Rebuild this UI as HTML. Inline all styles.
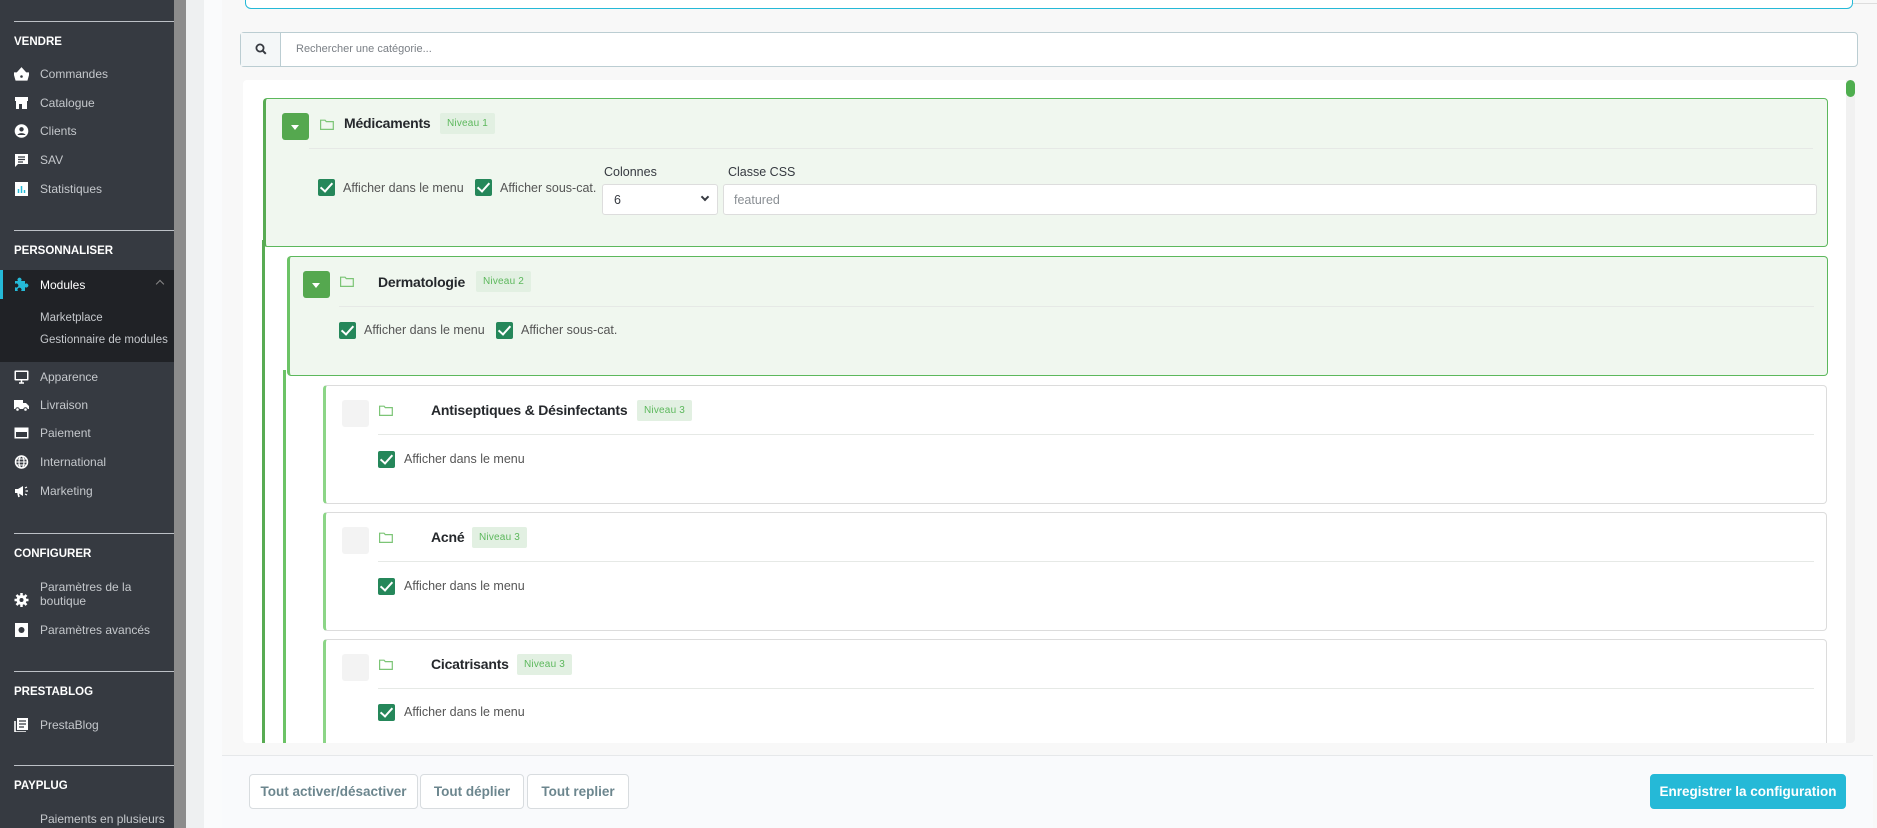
<!DOCTYPE html>
<html><head><meta charset="utf-8">
<style>
*{box-sizing:border-box;margin:0;padding:0}
body{width:1877px;height:828px;overflow:hidden;position:relative;background:#f8f8f8;font-family:"Liberation Sans",sans-serif;color:#363a41}
.a{position:absolute}
#sb{left:0;top:0;width:174px;height:828px;background:#363a41}
.hd{position:absolute;left:14px;font-size:11.5px;font-weight:bold;color:#fff}
.dv{position:absolute;left:14px;width:160px;height:1px;background:#bcc0c6}
.it{position:absolute;left:40px;font-size:12px;color:#c5c8cc;line-height:14px}
.ic{position:absolute;left:14px;width:15px;height:14px}
.cb{position:absolute;width:17px;height:17px;background:#25875a;border-radius:2px}
.cb:after{content:"";position:absolute;left:5px;top:1px;width:5px;height:10px;border:solid #fff;border-width:0 2.5px 2.5px 0;transform:rotate(42deg)}
.lb{position:absolute;font-size:12.5px;color:#555}
.badge{position:absolute;height:21px;background:#e2f0e2;color:#5cb85c;font-size:10px;line-height:21px;padding:0 7px;border-radius:2px;letter-spacing:0.2px}
.tg{position:absolute;width:27px;height:27px;background:#55a84f;border-radius:3px}
.tg:after{content:"";position:absolute;left:9px;top:12px;border-left:4.5px solid transparent;border-right:4.5px solid transparent;border-top:5px solid #fff}
.fd{position:absolute;width:14px;height:11px}
.tt{position:absolute;font-size:14px;font-weight:bold;color:#25282c;letter-spacing:-0.2px}
.hr{position:absolute;height:1px;background:#e6e9e6}
.c3{position:absolute;left:323px;width:1504px;height:119px;background:#fff;border:1px solid #dcdcdc;border-left:3px solid #8cd587;border-radius:4px}
.ph{position:absolute;width:27px;height:27px;background:#f3f3f3;border-radius:3px}
.btn{position:absolute;top:774px;height:35px;border:1px solid #d8dcdf;border-radius:4px;background:#fff;color:#6c868e;font-size:13.5px;font-weight:bold;text-align:center;line-height:33px}
</style></head><body>
<div id="sb" class="a">
<div class="dv" style="top:21px"></div>
<div class="hd" style="top:36px">VENDRE</div>
<svg class="ic" style="top:67px" viewBox="0 0 15 14"><path d="M0 6h15l-2 7H2z M3 6l4.5-5L12 6" fill="#fff" stroke="#fff" stroke-width="1.2"/><circle cx="7.5" cy="9.5" r="1.3" fill="#363a41"/></svg>
<div class="it" style="top:67px">Commandes</div>
<svg class="ic" style="top:96px" viewBox="0 0 15 14"><path d="M1 1h13v4H1z M2 5h11v8H2z" fill="#fff"/><rect x="5" y="8" width="3" height="5" fill="#363a41"/></svg>
<div class="it" style="top:96px">Catalogue</div>
<svg class="ic" style="top:124px" viewBox="0 0 15 14"><circle cx="7.5" cy="7" r="6.8" fill="#fff"/><circle cx="7.5" cy="5.3" r="2.2" fill="#363a41"/><path d="M3.5 11c1-2.5 7-2.5 8 0" fill="#363a41"/></svg>
<div class="it" style="top:124px">Clients</div>
<svg class="ic" style="top:153px" viewBox="0 0 15 14"><path d="M1 1h13v10H4l-3 3z" fill="#fff"/><path d="M4 4h7M4 6.5h7M4 9h5" stroke="#363a41" stroke-width="1.2"/></svg>
<div class="it" style="top:153px">SAV</div>
<svg class="ic" style="top:182px" viewBox="0 0 15 14"><rect x="1" y="0" width="13" height="14" fill="#fff"/><path d="M4.5 11V7M7.5 11V4M10.5 11V8" stroke="#25b9d7" stroke-width="1.5"/></svg>
<div class="it" style="top:182px">Statistiques</div>
<div class="dv" style="top:230px"></div>
<div class="hd" style="top:245px">PERSONNALISER</div>
<div class="a" style="left:0;top:270px;width:174px;height:92px;background:#202226"></div>
<div class="a" style="left:0;top:270px;width:3px;height:29px;background:#25b9d7"></div>
<svg class="ic" style="top:277px" viewBox="0 0 15 14"><path d="M1 4h3a2 2 0 1 1 3 0h4v3a2 2 0 1 1 0 3v4H7a2 2 0 1 0-3 0H1v-4a2 2 0 1 0 0-3z" fill="#25b9d7"/></svg>
<div class="it" style="top:278px;color:#fff">Modules</div>
<div class="a" style="left:157px;top:281px;width:6px;height:6px;border-left:1.3px solid #888;border-top:1.3px solid #888;transform:rotate(45deg)"></div>
<div class="it" style="top:311px;font-size:11.5px">Marketplace</div>
<div class="it" style="top:333px;font-size:11.5px">Gestionnaire de modules</div>
<svg class="ic" style="top:370px" viewBox="0 0 15 14"><rect x="0.5" y="0.5" width="14" height="10" rx="1" fill="#fff"/><rect x="2" y="2" width="11" height="7" fill="#363a41"/><path d="M5 13h5M7.5 10v3" stroke="#fff" stroke-width="1.5"/></svg>
<div class="it" style="top:370px">Apparence</div>
<svg class="ic" style="top:398px" viewBox="0 0 15 14"><path d="M0 2h9v9H0z M9 5h3l3 3v3H9z" fill="#fff"/><circle cx="3.5" cy="11.5" r="1.8" fill="#fff" stroke="#363a41"/><circle cx="11.5" cy="11.5" r="1.8" fill="#fff" stroke="#363a41"/></svg>
<div class="it" style="top:398px">Livraison</div>
<svg class="ic" style="top:426px" viewBox="0 0 15 14"><rect x="0.5" y="1.5" width="14" height="11" fill="#fff"/><rect x="2" y="6" width="11" height="5" fill="#363a41"/></svg>
<div class="it" style="top:426px">Paiement</div>
<svg class="ic" style="top:455px" viewBox="0 0 15 14"><circle cx="7.5" cy="7" r="6" fill="none" stroke="#fff" stroke-width="1.5"/><ellipse cx="7.5" cy="7" rx="2.5" ry="6" fill="none" stroke="#fff" stroke-width="1.2"/><path d="M1.5 7h12M2.5 4h10M2.5 10h10" stroke="#fff" stroke-width="1"/></svg>
<div class="it" style="top:455px">International</div>
<svg class="ic" style="top:484px" viewBox="0 0 15 14"><path d="M1 5h3l5-3v10L4 9H1z" fill="#fff"/><path d="M4 9l1 4" stroke="#fff" stroke-width="1.6"/><path d="M11 4l2-1M11.5 7h2.5M11 10l2 1" stroke="#fff" stroke-width="1.2"/></svg>
<div class="it" style="top:484px">Marketing</div>
<div class="dv" style="top:533px"></div>
<div class="hd" style="top:548px">CONFIGURER</div>
<svg class="ic" style="top:593px" viewBox="0 0 15 14"><circle cx="7.5" cy="7" r="5" fill="#fff"/><path d="M7.5 0v14M0.5 7h14M2.5 2l10 10M12.5 2l-10 10" stroke="#fff" stroke-width="2.5"/><circle cx="7.5" cy="7" r="2" fill="#363a41"/></svg>
<div class="it" style="top:580px">Paramètres de la<br>boutique</div>
<svg class="ic" style="top:623px" viewBox="0 0 15 14"><rect x="1" y="0" width="13" height="14" fill="#fff"/><circle cx="7.5" cy="7" r="3" fill="#363a41"/></svg>
<div class="it" style="top:623px">Paramètres avancés</div>
<div class="dv" style="top:671px"></div>
<div class="hd" style="top:686px">PRESTABLOG</div>
<svg class="ic" style="top:718px" viewBox="0 0 15 14"><rect x="3" y="0" width="11" height="12" fill="#fff"/><path d="M1 3v11h11" fill="none" stroke="#fff" stroke-width="1.6"/><path d="M5 3h7M5 6h7M5 9h5" stroke="#363a41" stroke-width="1.2"/></svg>
<div class="it" style="top:718px">PrestaBlog</div>
<div class="dv" style="top:765px"></div>
<div class="hd" style="top:780px">PAYPLUG</div>
<div class="it" style="top:812px">Paiements en plusieurs</div>
</div>
<div class="a" style="left:174px;top:0;width:12px;height:828px;background:#8c8c8c"></div>
<div class="a" style="left:186px;top:0;width:18px;height:828px;background:#eef0f1"></div>
<div class="a" style="left:204px;top:0;width:18px;height:828px;background:#fafbfc"></div>
<div class="a" style="left:222px;top:0;width:1655px;height:828px;background:#f8f8f8"></div>
<div class="a" style="left:245px;top:-10px;width:1608px;height:19px;border:1px solid #25b9d7;border-radius:0 0 6px 6px;background:#fff"></div>
<div class="a" style="left:1853px;top:3px;width:24px;height:1px;background:#ddd"></div>
<!-- search -->
<div class="a" style="left:240px;top:32px;width:1618px;height:35px;border:1px solid #bbcdd2;border-radius:4px;background:#fff"></div>
<div class="a" style="left:241px;top:33px;width:40px;height:33px;background:#f4f7f8;border-right:1px solid #bbcdd2"></div>
<svg class="a" style="left:255px;top:43px" width="12" height="12" viewBox="0 0 12 12"><circle cx="5" cy="5" r="3.6" fill="none" stroke="#363a41" stroke-width="1.8"/><path d="M7.6 7.6l3.2 3.2" stroke="#363a41" stroke-width="2"/></svg>
<div class="a" style="left:296px;top:43px;font-size:11px;color:#7a7f85">Rechercher une catégorie...</div>
<!-- tree -->
<div class="a" style="left:243px;top:80px;width:1612px;height:663px;background:#fff;border-radius:4px;overflow:hidden">
<div class="a" style="left:1603px;top:0;width:9px;height:663px;background:#f1f1f1"></div>
<div class="a" style="left:1603px;top:0;width:9px;height:17px;background:#4fae4f;border-radius:5px"></div>
</div>
<div class="a" style="left:262px;top:240px;width:3px;height:503px;background:#58ab53"></div>
<div class="a" style="left:283px;top:370px;width:3px;height:373px;background:#6cc366"></div>
<!-- level1 -->
<div class="a" style="left:263px;top:98px;width:1565px;height:149px;background:#f0f7ef;border:1px solid #5cb85c;border-left:3px solid #58ab53;border-radius:4px"></div>
<div class="tg" style="left:282px;top:113px"></div>
<svg class="fd" style="left:320px;top:119px" viewBox="0 0 14 11"><path d="M0.6 1.2h4.5l1.2 1.4h7v7.8H0.6z" fill="none" stroke="#7cc576" stroke-width="1.2"/></svg>
<div class="tt" style="left:344px;top:115px">Médicaments</div>
<div class="badge" style="left:440px;top:113px">Niveau 1</div>
<div class="hr" style="left:309px;top:148px;width:1504px"></div>
<div class="cb" style="left:318px;top:179px"></div><div class="lb" style="left:343px;top:181px">Afficher dans le menu</div>
<div class="cb" style="left:475px;top:179px"></div><div class="lb" style="left:500px;top:181px">Afficher sous-cat.</div>
<div class="lb" style="left:604px;top:165px;color:#363a41">Colonnes</div>
<div class="a" style="left:602px;top:184px;width:116px;height:31px;background:#fff;border:1px solid #ddd;border-radius:3px"></div>
<div class="lb" style="left:614px;top:193px;color:#363a41">6</div>
<div class="a" style="left:702px;top:194px;width:6px;height:6px;border-right:2px solid #363a41;border-bottom:2px solid #363a41;transform:rotate(45deg)"></div>
<div class="lb" style="left:728px;top:165px;color:#363a41">Classe CSS</div>
<div class="a" style="left:723px;top:184px;width:1094px;height:31px;background:#fff;border:1px solid #ddd;border-radius:3px"></div>
<div class="lb" style="left:734px;top:193px;color:#8a8f94">featured</div>
<!-- level2 -->
<div class="a" style="left:287px;top:256px;width:1541px;height:120px;background:#f0f7ef;border:1px solid #5cb85c;border-left:3px solid #6cc366;border-radius:4px"></div>
<div class="tg" style="left:303px;top:271px"></div>
<svg class="fd" style="left:340px;top:276px" viewBox="0 0 14 11"><path d="M0.6 1.2h4.5l1.2 1.4h7v7.8H0.6z" fill="none" stroke="#7cc576" stroke-width="1.2"/></svg>
<div class="tt" style="left:378px;top:274px">Dermatologie</div>
<div class="badge" style="left:476px;top:271px">Niveau 2</div>
<div class="hr" style="left:339px;top:306px;width:1475px"></div>
<div class="cb" style="left:339px;top:322px"></div><div class="lb" style="left:364px;top:323px">Afficher dans le menu</div>
<div class="cb" style="left:496px;top:322px"></div><div class="lb" style="left:521px;top:323px">Afficher sous-cat.</div>
<!-- level3 -->
<div class="c3" style="top:385px"></div>
<div class="ph" style="left:342px;top:400px"></div>
<svg class="fd" style="left:379px;top:405px" viewBox="0 0 14 11"><path d="M0.6 1.2h4.5l1.2 1.4h7v7.8H0.6z" fill="none" stroke="#7cc576" stroke-width="1.2"/></svg>
<div class="tt" style="left:431px;top:402px">Antiseptiques &amp; Désinfectants</div>
<div class="badge" style="left:637px;top:400px">Niveau 3</div>
<div class="hr" style="left:378px;top:434px;width:1436px"></div>
<div class="cb" style="left:378px;top:451px"></div><div class="lb" style="left:404px;top:452px">Afficher dans le menu</div>

<div class="c3" style="top:512px"></div>
<div class="ph" style="left:342px;top:527px"></div>
<svg class="fd" style="left:379px;top:532px" viewBox="0 0 14 11"><path d="M0.6 1.2h4.5l1.2 1.4h7v7.8H0.6z" fill="none" stroke="#7cc576" stroke-width="1.2"/></svg>
<div class="tt" style="left:431px;top:529px">Acné</div>
<div class="badge" style="left:472px;top:527px">Niveau 3</div>
<div class="hr" style="left:378px;top:561px;width:1436px"></div>
<div class="cb" style="left:378px;top:578px"></div><div class="lb" style="left:404px;top:579px">Afficher dans le menu</div>

<div class="c3" style="top:639px;height:140px"></div>
<div class="ph" style="left:342px;top:654px"></div>
<svg class="fd" style="left:379px;top:659px" viewBox="0 0 14 11"><path d="M0.6 1.2h4.5l1.2 1.4h7v7.8H0.6z" fill="none" stroke="#7cc576" stroke-width="1.2"/></svg>
<div class="tt" style="left:431px;top:656px">Cicatrisants</div>
<div class="badge" style="left:517px;top:654px">Niveau 3</div>
<div class="hr" style="left:378px;top:688px;width:1436px"></div>
<div class="cb" style="left:378px;top:704px"></div><div class="lb" style="left:404px;top:705px">Afficher dans le menu</div>
<!-- cover below tree -->
<div class="a" style="left:222px;top:743px;width:1655px;height:85px;background:#f8f8f8"></div>
<div class="a" style="left:222px;top:755px;width:1651px;height:73px;background:#f9fafc;border-top:1px solid #e6e8ea"></div>
<div class="btn" style="left:249px;width:169px">Tout activer/désactiver</div>
<div class="btn" style="left:420px;width:104px">Tout déplier</div>
<div class="btn" style="left:527px;width:102px">Tout replier</div>
<div class="btn" style="left:1650px;width:196px;background:#25b9d7;border-color:#25b9d7;color:#fff">Enregistrer la configuration</div>
</body></html>
